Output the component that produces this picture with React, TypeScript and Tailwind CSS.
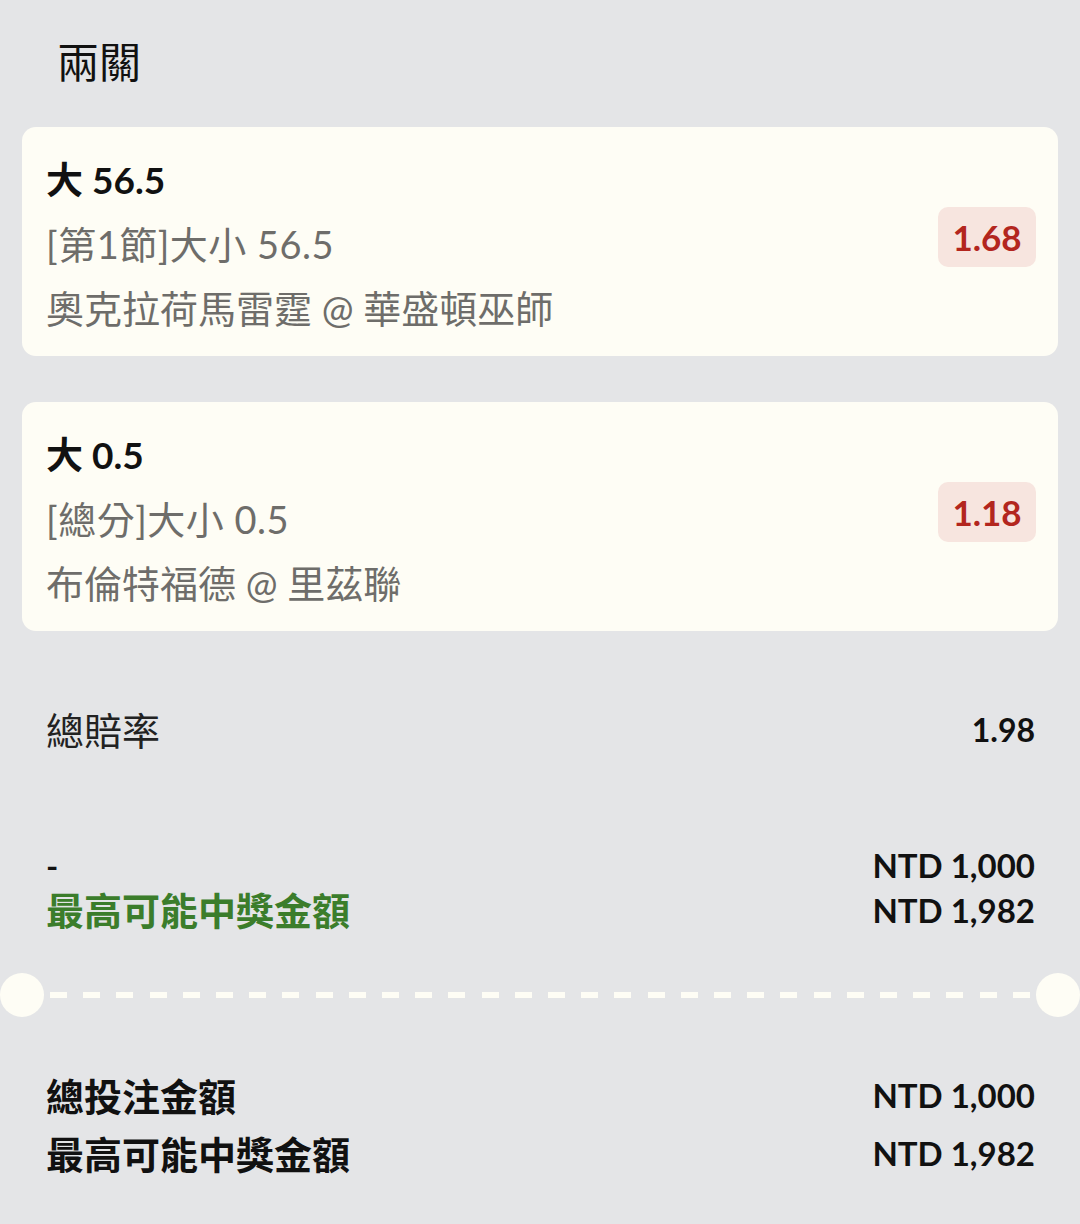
const FONT = "font-['Lato','Noto_Sans_CJK_TC','Noto_Sans',sans-serif]";

interface Leg {
  pick: string;
  market: string;
  match: string;
  odds: string;
}

const legs: Leg[] = [
  { pick: '大 56.5', market: '[第1節]大小 56.5', match: '奧克拉荷馬雷霆 @ 華盛頓巫師', odds: '1.68' },
  { pick: '大 0.5', market: '[總分]大小 0.5', match: '布倫特福德 @ 里茲聯', odds: '1.18' }
];

function LegCard({ leg }: { leg: Leg }): JSX.Element {
  return (
    <div className="flex items-center justify-between rounded-[14px] bg-[#fefdf5] pb-[16px] pl-[24px] pr-[22px] pt-[21px]">
      <div className="min-w-0 text-[38px] leading-[64px]">
        <div className="text-[37px] font-bold text-[#111]">{leg.pick}</div>
        <div className="tracking-[0.5px] text-[#6e6d6a]">{leg.market}</div>
        <div className="text-[#6e6d6a]">{leg.match}</div>
      </div>
      <div className="-mt-[14px] flex h-[60px] w-[98px] items-center justify-center rounded-[10px] bg-[#f7e5df] text-[35px] font-bold text-[#b3261e]">
        {leg.odds}
      </div>
    </div>
  );
}

function Dashed(): JSX.Element {
  return (
    <div className="flex h-[44px] items-center">
      <div className="h-[44px] w-[44px] shrink-0 rounded-full bg-[#fefdf5]" />
      <div className="mx-[6px] flex flex-1 items-center justify-between">
        {Array.from({ length: 30 }).map((_, i) => (
          <div key={i} className="h-[6px] w-[17px] bg-[#fefdf5]" />
        ))}
      </div>
      <div className="h-[44px] w-[44px] shrink-0 rounded-full bg-[#fefdf5]" />
    </div>
  );
}

export default function App(): JSX.Element {
  return (
    <div className={`min-h-[1224px] w-[1080px] bg-[#e4e5e7] text-[#111] ${FONT}`}>
      <div className="h-[127px] pl-[57px] pt-[30px] text-[42px] leading-[64px]">兩關</div>

      <div className="flex flex-col gap-[46px] px-[22px]">
        {legs.map((leg) => (
          <LegCard key={leg.odds} leg={leg} />
        ))}
      </div>

      <div className="mt-[67px] flex h-[64px] items-center justify-between pl-[46px] pr-[45px]">
        <span className="text-[38px] text-[#222]">總賠率</span>
        <span className="text-[32px] font-bold">1.98</span>
      </div>

      <div className="mt-[81px] pl-[46px] pr-[45px]">
        <div className="flex h-[45px] items-center justify-between">
          <span className="text-[33px] font-bold">-</span>
          <span className="text-[33px] font-bold">NTD 1,000</span>
        </div>
        <div className="flex h-[45px] items-center justify-between">
          <span className="text-[38px] font-bold text-[#3b7d2b]">最高可能中獎金額</span>
          <span className="text-[33px] font-bold">NTD 1,982</span>
        </div>
      </div>

      <div className="mt-[40px]">
        <Dashed />
      </div>

      <div className="mt-[50px] pl-[46px] pr-[45px]">
        <div className="flex h-[58px] items-center justify-between">
          <span className="text-[38px] font-bold">總投注金額</span>
          <span className="text-[33px] font-bold">NTD 1,000</span>
        </div>
        <div className="flex h-[58px] items-center justify-between">
          <span className="text-[38px] font-bold">最高可能中獎金額</span>
          <span className="text-[33px] font-bold">NTD 1,982</span>
        </div>
      </div>
    </div>
  );
}
